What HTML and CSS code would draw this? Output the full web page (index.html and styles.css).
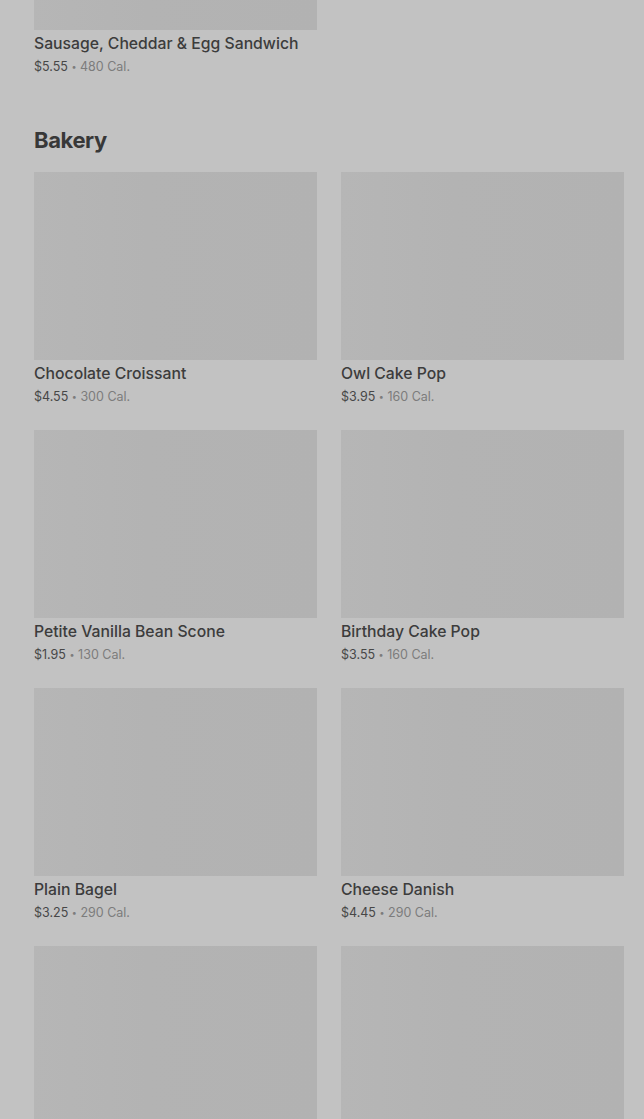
FILE: index.html
```html
<!DOCTYPE html>
<html lang="en">
<head>
    <meta charset="UTF-8">
    <meta name="viewport" content="width=device-width, initial-scale=1.0">
    <title>Menu</title>
<link rel="stylesheet" href="styles.css">
</head>
<body>
    <div id="menu">
        <!-- Előző kategória vége -->
        <section class="category first">
            <div class="grid">
                <div class="card">
                    <div class="thumb"></div>
                    <p class="name">Sausage, Cheddar &amp; Egg Sandwich</p>
                    <p class="meta"><span class="price">$5.55</span> <span class="dot">&bull;</span> 480 Cal.</p>
                </div>
            </div>
        </section>

        <section class="category">
            <h2>Bakery</h2>
            <div class="grid">
                <div class="card">
                    <div class="thumb"></div>
                    <p class="name">Chocolate Croissant</p>
                    <p class="meta"><span class="price">$4.55</span> <span class="dot">&bull;</span> 300 Cal.</p>
                </div>
                <div class="card">
                    <div class="thumb"></div>
                    <p class="name">Owl Cake Pop</p>
                    <p class="meta"><span class="price">$3.95</span> <span class="dot">&bull;</span> 160 Cal.</p>
                </div>
                <div class="card">
                    <div class="thumb"></div>
                    <p class="name">Petite Vanilla Bean Scone</p>
                    <p class="meta"><span class="price">$1.95</span> <span class="dot">&bull;</span> 130 Cal.</p>
                </div>
                <div class="card">
                    <div class="thumb"></div>
                    <p class="name">Birthday Cake Pop</p>
                    <p class="meta"><span class="price">$3.55</span> <span class="dot">&bull;</span> 160 Cal.</p>
                </div>
                <div class="card">
                    <div class="thumb"></div>
                    <p class="name">Plain Bagel</p>
                    <p class="meta"><span class="price">$3.25</span> <span class="dot">&bull;</span> 290 Cal.</p>
                </div>
                <div class="card">
                    <div class="thumb"></div>
                    <p class="name">Cheese Danish</p>
                    <p class="meta"><span class="price">$4.45</span> <span class="dot">&bull;</span> 290 Cal.</p>
                </div>
                <!-- a képernyő alján csak a képek látszanak -->
                <div class="card">
                    <div class="thumb"></div>
                </div>
                <div class="card">
                    <div class="thumb"></div>
                </div>
            </div>
        </section>
    </div>
</body>
</html>
```
FILE: styles.css
```css
 body {
     font-family: Inter, "Noto Sans", Arial, sans-serif;
     margin: 0;
     padding: 0;
     background-color: #c2c2c2;
     overflow: hidden;
 }

 #menu {
     padding: 0 20px 0 34px;
     margin-top: -158px;
 }

 .category {
     margin-bottom: 50px;
 }

 .category h2 {
     margin: 0 0 18px 0;
     font-size: 22px;
     line-height: 28px;
     font-weight: 700;
     letter-spacing: -0.4px;
     color: #383838;
 }

 .grid {
     display: grid;
     grid-template-columns: 283px 283px;
     column-gap: 24px;
     row-gap: 24px;
 }

 .thumb {
     height: 188px;
     background: linear-gradient(90deg, #b6b6b6 0%, #b3b3b3 40%, #b2b2b2 100%);
 }

 .name {
     margin: 4px 0 0 0;
     font-size: 15.75px;
     line-height: 20px;
     font-weight: 500;
     color: #3c3c3c;
     white-space: nowrap;
 }

 .meta {
     margin: 4px 0 0 0;
     font-size: 12.5px;
     line-height: 18px;
     color: #7c7c7c;
 }

 .price {
     color: #474747;
 }

 .dot {
     font-size: 9px;
     vertical-align: 1px;
 }
```
